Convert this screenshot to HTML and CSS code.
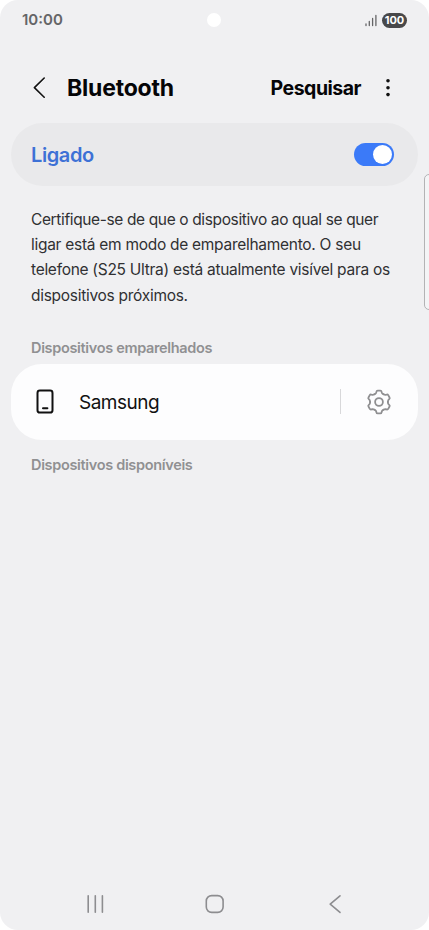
FILE: index.html
```html
<!DOCTYPE html>
<html lang="pt">
<head>
<meta charset="utf-8">
<title>Bluetooth</title>
<link rel="stylesheet" href="styles.css">
</head>
<body>
<div class="phone">
  <header class="status">
    <span class="clock">10:00</span>
    <i class="camera"></i>
    <div class="indicators">
      <svg class="signal" width="12" height="13" viewBox="0 0 12 13"><path d="M1 10V11.5M4.3 7.5V11.5M7.6 4.5V11.5M10.9 1.5V11.5"/></svg>
      <span class="battery">100</span>
    </div>
  </header>
  <div class="titlebar">
    <svg class="back" width="14" height="22" viewBox="0 0 14 22"><path d="M12.2 1 2.4 10.6l9.8 9.6"/></svg>
    <h1 class="title">Bluetooth</h1>
    <span class="search">Pesquisar</span>
    <svg class="more" width="6" height="20" viewBox="0 0 6 20"><circle cx="3" cy="2.8" r="1.8"/><circle cx="3" cy="9.7" r="1.8"/><circle cx="3" cy="16.6" r="1.8"/></svg>
  </div>
  <section class="switch-row">
    <span class="switch-label">Ligado</span>
    <div class="toggle"><i class="knob"></i></div>
  </section>
  <p class="description"><span class="tight">Certifique-se de que o dispositivo ao qual se quer</span><br>ligar está em modo de emparelhamento. O seu<br>telefone (S25 Ultra) está atualmente visível para os<br>dispositivos próximos.</p>
  <h2 class="section paired">Dispositivos emparelhados</h2>
  <section class="device">
    <svg class="device-icon" width="18" height="26" viewBox="0 0 18 26"><rect x="1.5" y="1.6" width="15" height="22" rx="2.4"/><path d="M7 19.3h4.4"/></svg>
    <span class="device-name">Samsung</span>
    <i class="divider"></i>
    <svg class="gear" width="26" height="26" viewBox="-13 -13 26 26">
      <defs><path id="tooth" d="M-4.45-7.7Q-3.3-8.36-2.9-9.2L-2.6-10.3Q-2.4-11.4-1.3-11.4H1.3Q2.4-11.4 2.6-10.3L2.9-9.2Q3.3-8.36 4.45-7.7"/></defs>
      <use href="#tooth"/><use href="#tooth" transform="rotate(60)"/><use href="#tooth" transform="rotate(120)"/><use href="#tooth" transform="rotate(180)"/><use href="#tooth" transform="rotate(240)"/><use href="#tooth" transform="rotate(300)"/>
      <circle r="3.9"/>
    </svg>
  </section>
  <h2 class="section available">Dispositivos disponíveis</h2>
  <nav class="nav">
    <svg width="18" height="20" viewBox="0 0 18 20"><path d="M1.2 1.8v16.4M8.3 1.8v16.4M15.4 1.8v16.4"/></svg>
    <svg width="20" height="20" viewBox="0 0 20 20"><rect x="1.3" y="1.6" width="16.8" height="16.8" rx="5.4"/></svg>
    <svg width="14" height="20" viewBox="0 0 14 20"><path d="M12 1.8 2.2 10.2l9.8 8.2"/></svg>
  </nav>
  <i class="edge-handle"></i>
</div>
</body>
</html>
```
FILE: styles.css
```css
* { box-sizing: border-box; }
body { margin: 0; background: #fff; font-family: Inter, Roboto, sans-serif; }
svg { display: block; flex: none; fill: none; stroke-linecap: round; stroke-linejoin: round; }
h1, h2, p { margin: 0; }
.phone { position: relative; width: 429px; height: 930px; background: #f0f0f2; border-radius: 18px; overflow: hidden; display: flex; flex-direction: column; }
.status { height: 40px; padding: 0 22px; display: grid; grid-template-columns: 185px 14px 1fr; align-items: center; }
.clock { font-size: 15px; line-height: 18px; margin-top: -1px; font-weight: 600; color: #656567; }
.camera { width: 14px; height: 14px; border-radius: 50%; background: #fff; }
.indicators { display: flex; justify-content: flex-end; align-items: center; gap: 5px; }
.signal { stroke: #656567; stroke-width: 1.3; }
.battery { width: 25px; height: 15px; border-radius: 8px; background: #48484a; color: #fff; font-size: 11px; line-height: 15px; font-weight: 700; text-align: center; }
.titlebar { height: 83px; padding: 12px 38px 0 32px; display: flex; align-items: center; }
.back { stroke: #111; stroke-width: 1.6; }
.title { margin-left: 21px; font-size: 23px; line-height: 30px; font-weight: 700; letter-spacing: -0.2px; color: #050507; }
.search { margin-left: auto; font-size: 19.5px; font-weight: 700; letter-spacing: -0.5px; color: #050507; }
.more { margin-left: 24px; fill: #111; }
.switch-row { height: 63px; margin: 0 11px; padding: 0 24px 0 20px; border-radius: 32px; background: #e9e9eb; display: flex; align-items: center; justify-content: space-between; }
.switch-label { font-size: 20px; font-weight: 600; letter-spacing: -0.4px; color: #3d71d6; }
.toggle { width: 40px; height: 23px; padding: 2px; border-radius: 12px; background: #3b7af8; display: flex; justify-content: flex-end; align-items: center; }
.knob { width: 19px; height: 19px; border-radius: 50%; background: #fff; }
.description { margin: 21px 0 0 31px; font-size: 15.5px; line-height: 25.2px; letter-spacing: -0.28px; color: #303033; white-space: nowrap; }
.tight { letter-spacing: -0.37px; }
.section { margin-left: 31px; font-size: 14.5px; line-height: 20px; font-weight: 600; letter-spacing: -0.33px; color: #909092; }
.paired { margin-top: 30px; }
.device { height: 76px; margin: 6px 11px 0; padding: 0 26px 0 25px; border-radius: 31px; background: #fdfdfe; display: flex; align-items: center; }
.device-icon { stroke: #111; stroke-width: 2; }
.device-name { margin: 1px 0 0 25px; font-size: 19px; letter-spacing: -0.5px; color: #111; }
.divider { width: 1px; height: 25px; margin-left: auto; background: #d8d8da; }
.gear { margin-left: 25px; stroke: #8f8f91; stroke-width: 1.8; }
.available { margin-top: 15px; }
.nav { margin-top: auto; height: 52px; padding: 0 87px 0 86.5px; display: flex; align-items: center; justify-content: space-between; stroke: #8d8d90; stroke-width: 1.6; }
.nav svg:nth-child(2) { margin-right: 3px; }
.edge-handle { position: absolute; left: 424px; top: 174px; width: 10px; height: 136px; border: 1.5px solid #b3b3b5; border-radius: 5px; background: #f4f4f6; }
```
